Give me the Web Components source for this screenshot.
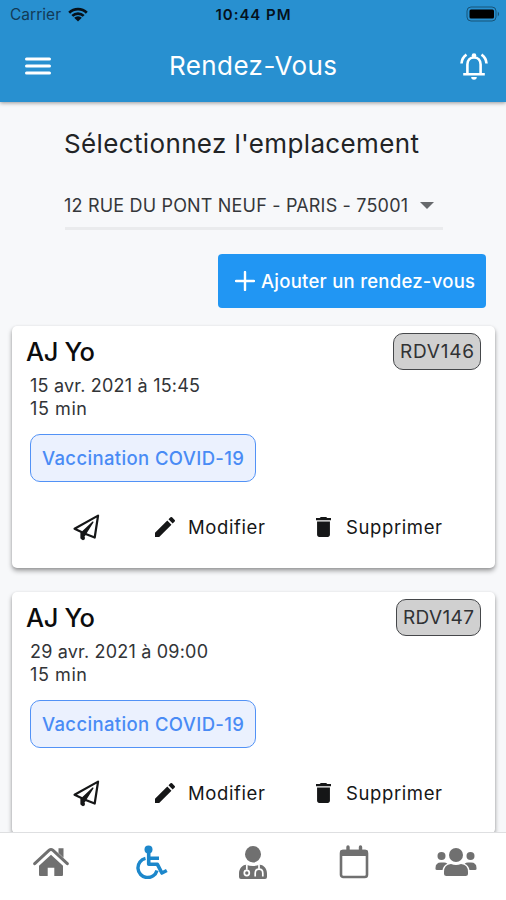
<!DOCTYPE html>
<html lang="fr"><head><meta charset="utf-8"><title>Rendez-Vous</title>
<style>
body{margin:0;background:#f7f8fa;font-family:Inter,Roboto,"Liberation Sans",sans-serif;width:506px;height:900px;overflow:hidden}
</style></head><body>
<app-screen></app-screen>
<script>
const define=(name,html,setup)=>customElements.define(name,class extends HTMLElement{
  connectedCallback(){
    if(this.shadowRoot)return;
    const r=this.attachShadow({mode:'open'});
    r.innerHTML=html;
    if(setup)setup(this,r);
  }
});

/* Single line of text whose tracking is spread to a given width */
define('fit-text',`<style>:host{display:block;white-space:nowrap}span{display:inline-block}</style><span></span>`,(h,r)=>{
  const s=r.querySelector('span');s.textContent=h.getAttribute('text');
  const n=s.textContent.length,w=+h.getAttribute('w');
  if(n<2||!w)return;
  const ls=(w-s.getBoundingClientRect().width)/(n-1);
  s.style.letterSpacing=ls+'px';s.style.marginRight=-ls+'px';
});

const icons={
menu:['0 0 26 18','<path d="M1.500 2h23M1.500 9h23M1.500 16h23" stroke="currentColor" stroke-width="3" stroke-linecap="round"/>'],
bell:['0 0 28 28','<path d="M7.400 21.300V12.500c0-4 2.600-7 6.600-7s6.600 3 6.600 7v8.800" fill="none" stroke="currentColor" stroke-width="2.600"/><path d="M3.200 22.200h21.600M1.500 11.500c.2-4 2-6.800 5-8.900M26.500 11.500c-.2-4-2-6.800-5-8.900" fill="none" stroke="currentColor" stroke-width="2.600"/><circle cx="14" cy="3.500" r="2.300"/><path d="M11.200 25h5.600a2.800 2.800 0 0 1-5.600 0"/>'],
wifi:['0 0 20 15','<path d="M1.200 5.700a12.500 12.500 0 0 1 17.600 0M4.300 8.900a8.200 8.200 0 0 1 11.400 0" fill="none" stroke="currentColor" stroke-width="2.700"/><path d="M6.200 10.800a5.500 5.500 0 0 1 7.600 0L10 14.600z"/>'],
battery:['0 0 34 16','<rect x="1" y="1" width="29" height="14" rx="4" fill="none" stroke="currentColor" stroke-opacity=".42"/><rect x="3.500" y="3.500" width="24.500" height="9" rx="1.500"/><path d="M31.800 5.500q2.500 2.500 0 5z" opacity=".45"/>'],
plus:['0 0 20 20','<path d="M10 1v18M1 10h18" stroke="currentColor" stroke-width="2.400" stroke-linecap="round"/>'],
plane:['0 0 28 28','<path d="M26 1.700 1.600 15.200l7.200 3.400v6.200l3.700-4.400 10 4z" fill="none" stroke="currentColor" stroke-width="2.300" stroke-linejoin="round"/><path d="M20.500 8.500 9.500 19v6l3-4z" stroke="currentColor" stroke-width="1.600" stroke-linejoin="round"/><circle cx="10.400" cy="25" r="2.100"/>'],
pencil:['3 3 18 18','<path d="M3 17.250V21h3.750L17.810 9.940l-3.750-3.750zM20.710 7.040a1 1 0 0 0 0-1.410l-2.340-2.340a1 1 0 0 0-1.410 0l-1.830 1.830 3.750 3.750z"/>'],
trash:['5 3 14 18','<path d="M6 19c0 1.100.9 2 2 2h8c1.100 0 2-.9 2-2V7H6zM19 4h-3.500l-1-1h-5l-1 1H5v2h14z"/>'],
home:['0 0 36 30','<path d="M1.700 16.700 16.200 3.200q1.800-1.500 3.600 0L34.300 16.700" fill="none" stroke="currentColor" stroke-width="3" stroke-linecap="round"/><path d="M25.500 1.200h5v9.600l-5-4.700z"/><path d="M18 7.800 30 18.800v9.100q0 1.100-1.100 1.100h-7.600v-8.300h-6.600V29H7.100Q6 29 6 27.900v-9.100z"/>'],
wheel:['0 0 34 34','<circle cx="13.500" cy="4.500" r="4"/><path d="M13.700 8v11.300h8.700l4.500 8.700 4.900-2.500M14 13.300h10" fill="none" stroke="currentColor" stroke-width="3.600" stroke-linejoin="round"/><path d="M10.500 13.400A9.700 9.700 0 1 0 22 25.500" fill="none" stroke="currentColor" stroke-width="3.400"/>'],
doctor:['0 0 28 32','<circle cx="14" cy="8" r="8"/><path d="M0 30v-3c0-5 3-8.300 7.200-8.700q6.800 2.300 13.600 0c4.200.4 7.200 3.700 7.200 8.700v3q0 2-2 2H2q-2 0-2-2"/><g fill="none" stroke="#fff" stroke-width="1.700"><path d="M7.800 18v5M20 18v4.500M16.200 29.500v-3q0-4 3.800-4t3.800 4v3"/><circle cx="7.800" cy="26.200" r="2.500"/></g>'],
calendar:['0 0 30 34','<rect x="2" y="6" width="26" height="26" rx="2.300" fill="none" stroke="currentColor" stroke-width="2.600"/><path d="M1 7q0-2.300 2.300-2.300h23.400Q29 4.700 29 7v4H1z"/><path d="M9 2v4M21.500 2v4" stroke="currentColor" stroke-width="3.400" stroke-linecap="round"/>'],
people:['0 0 42 30','<circle cx="21" cy="8" r="7"/><circle cx="6.500" cy="9" r="4"/><circle cx="35.500" cy="9" r="4"/><path d="M9 26.500V25q0-7.500 7-8 5 2 10 0 7 .5 7 8v1.500q0 2.500-2.500 2.500h-19Q9 29 9 26.500M.5 22v-1q0-5.500 5.500-5.500h3q2 0 3.400 1.300-4.200 1.800-4.900 6.200H2q-1.500 0-1.500-1M41.500 22v-1q0-5.500-5.500-5.500h-3q-2 0-3.400 1.300 4.200 1.800 4.900 6.200H40q1.500 0 1.500-1"/>']
};
define('ui-icon',`<style>:host{display:block;flex:none}svg{display:block;fill:currentColor}</style><div></div>`,(h,r)=>{
  const [vb,p]=icons[h.getAttribute('name')];
  r.querySelector('div').innerHTML=`<svg width="${h.getAttribute('w')}" height="${h.getAttribute('h')}" viewBox="${vb}" preserveAspectRatio="none">${p}</svg>`;
});

define('status-bar',`<style>:host{display:grid;grid-template-columns:1fr auto 1fr;align-items:center;height:28px;padding:0 6px}
.l{display:flex;gap:7px;align-items:center;margin-left:4px;color:#06111a}.car{font-size:15.500px;color:#123a57}.t{font:600 15px Inter,sans-serif;color:#05121c}ui-icon.b{justify-self:end;color:#000}</style>
<div class="l"><fit-text class="car" text="Carrier" w="51"></fit-text><ui-icon name="wifi" w="20" h="15"></ui-icon></div>
<fit-text class="t" text="10:44 PM" w="75"></fit-text><ui-icon class="b" name="battery" w="34" h="16"></ui-icon>`);

define('app-header',`<style>:host{display:block;height:102px;background:#2890d0;box-shadow:0 1px 4px #0006;position:relative;z-index:1}
nav{height:75px;display:grid;grid-template-columns:1fr auto 1fr;align-items:center;padding:0 18px;box-sizing:border-box;color:#fff}
.t{font-size:26px;line-height:34px}.m{margin:0 0 0 7px}.b{justify-self:end}</style>
<status-bar></status-bar><nav><ui-icon class="m" name="menu" w="26" h="18"></ui-icon><fit-text class="t" text="Rendez-Vous" w="168"></fit-text><ui-icon class="b" name="bell" w="28" h="28"></ui-icon></nav>`);

define('place-select',`<style>:host{display:block;padding:24px 0 0 64px}
.h{font-size:26px;line-height:36px;color:#222426}
.s{display:flex;align-items:center;justify-content:space-between;box-sizing:border-box;margin:19px 0 0 1px;width:378px;height:49px;padding:3px 9px 0 0;border-bottom:3px solid #eaebed;font-size:18px;color:#35373a}
.s fit-text{margin-left:-1px}
i{width:0;height:0;border:7px solid transparent;border-top-color:#67696c;border-bottom:0}</style>
<fit-text class="h" text="Sélectionnez l'emplacement" w="355"></fit-text>
<div class="s"><fit-text text="12 RUE DU PONT NEUF - PARIS - 75001" w="344"></fit-text><i></i></div>`);

define('add-button',`<style>:host{display:flex;align-items:center;gap:6px;width:268px;height:54px;box-sizing:border-box;padding:0 0 0 17px;margin:24px 0 0 218px;background:#2196f3;border-radius:4px;color:#fff;font-size:18.500px;font-weight:500}</style>
<ui-icon name="plus" w="20" h="20"></ui-icon><fit-text text="Ajouter un rendez-vous" w="214"></fit-text>`);

define('action-item',`<style>:host{display:flex;align-items:center;color:#151617;font-size:18.500px}fit-text{margin:-1px 0 0 var(--gap)}</style>`,(h,r)=>{
  const a=n=>h.getAttribute(n);
  r.innerHTML+=`<ui-icon name="${a('icon')}" w="${a('iw')}" h="${a('ih')}"></ui-icon>`+(a('label')?`<fit-text text="${a('label')}" w="${a('w')}"></fit-text>`:'');
});

define('visit-card',`<style>:host{display:block;box-sizing:border-box;height:242px;margin:0 11px 0 12px;background:#fff;border-radius:5px;box-shadow:0 3px 5px #0005,0 1px 3px #0002;padding:7px 14px 0}
.top{display:flex;justify-content:space-between;align-items:flex-start;height:38px}
.n{font-size:25.500px;font-weight:500;line-height:37px;color:#0c0c0d}
.code{box-sizing:border-box;height:37px;border:1.500px solid #45474a;border-radius:10px;background:#d0d0d0;color:#303234;font-size:19px;line-height:35px;padding:0 6px}
.d{font-size:18px;line-height:23px;color:#323437;margin-left:4px}
.d1{margin-top:3px}
.tag{box-sizing:border-box;width:226px;height:48px;margin:14px 0 0 4px;border:1.500px solid #5292f6;border-radius:10px;background:#ebf1fe;color:#498bf5;font-size:18.500px;font-weight:500;line-height:46px;padding-left:11px}
.a{display:flex;height:28px;align-items:center;margin:31px 0 0 47px}
.e{margin-left:55px;--gap:13px}.s{margin-left:51px;--gap:15px}</style>
<div class="top"><div class="name"></div><div class="code"></div></div>
<div class="date"></div><fit-text class="d" text="15 min" w="57"></fit-text>
<div class="tag"><fit-text text="Vaccination COVID-19" w="202"></fit-text></div>
<div class="a"><action-item icon="plane" iw="27" ih="27"></action-item><action-item class="e" icon="pencil" iw="20" ih="20" label="Modifier" w="77"></action-item><action-item class="s" icon="trash" iw="15" ih="20" label="Supprimer" w="96"></action-item></div>`,(h,r)=>{
  const put=(q,c,t,w)=>{r.querySelector(q).innerHTML=`<fit-text class="${c}" text="${t}" w="${w}"></fit-text>`;};
  put('.name','n',h.getAttribute('name'),69);
  put('.code','c',h.getAttribute('code'),h.getAttribute('cw'));
  put('.date','d d1',h.getAttribute('date'),h.getAttribute('dw'));
});

define('tab-bar',`<style>:host{display:grid;grid-template-columns:repeat(5,1fr);justify-items:center;align-items:center;box-sizing:border-box;height:68px;padding-bottom:9px;background:#fff;border-top:1px solid #dedfe1;color:#707070;position:relative;z-index:1}.on{color:#1c87cb}ui-icon:last-of-type{margin-left:2px}</style>
<ui-icon name="home" w="36" h="30"></ui-icon><ui-icon class="on" name="wheel" w="34" h="34"></ui-icon><ui-icon name="doctor" w="28" h="33"></ui-icon><ui-icon name="calendar" w="30" h="34"></ui-icon><ui-icon name="people" w="42" h="30"></ui-icon>`);

define('app-screen',`<style>:host{display:flex;flex-direction:column;height:900px;overflow:hidden}main{flex:1;min-height:0;overflow:hidden}.list{display:grid;gap:24px;padding-top:18px}</style>
<app-header></app-header><main><place-select></place-select><add-button></add-button>
<div class="list"><visit-card name="AJ Yo" code="RDV146" cw="74" date="15 avr. 2021 à 15:45" dw="170"></visit-card>
<visit-card name="AJ Yo" code="RDV147" cw="71" date="29 avr. 2021 à 09:00" dw="178"></visit-card></div></main><tab-bar></tab-bar>`);
</script></body></html>
